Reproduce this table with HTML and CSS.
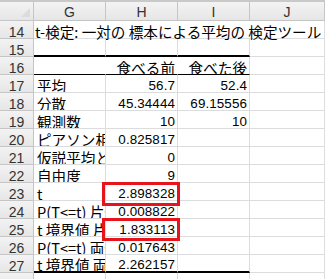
FILE: index.html
```html
<!DOCTYPE html>
<html lang="ja">
<head>
<meta charset="utf-8">
<link rel="stylesheet" href="styles.css">
</head>
<body>
<div class="sheet">
  <div class="hd corner"><span class="tri"></span></div>
  <div class="hd col">G</div>
  <div class="hd col">H</div>
  <div class="hd col">I</div>
  <div class="hd col">J</div>

  <div class="hd rn">14</div>
  <div class="c title span4">t-検定: 一対の 標本による平均の 検定ツール</div>

  <div class="hd rn">15</div>
  <div class="c thickb"></div><div class="c thickb"></div><div class="c thickb"></div><div class="c"></div>

  <div class="hd rn">16</div>
  <div class="c thinb nov"></div><div class="c thinb num nov">食べる前</div><div class="c thinb num">食べた後</div><div class="c"></div>

  <div class="hd rn">17</div>
  <div class="c">平均</div><div class="c num">56.7</div><div class="c num">52.4</div><div class="c"></div>

  <div class="hd rn">18</div>
  <div class="c">分散</div><div class="c num">45.34444</div><div class="c num">69.15556</div><div class="c"></div>

  <div class="hd rn">19</div>
  <div class="c">観測数</div><div class="c num">10</div><div class="c num">10</div><div class="c"></div>

  <div class="hd rn">20</div>
  <div class="c">ピアソン相関</div><div class="c num">0.825817</div><div class="c"></div><div class="c"></div>

  <div class="hd rn">21</div>
  <div class="c">仮説平均との差異</div><div class="c num">0</div><div class="c"></div><div class="c"></div>

  <div class="hd rn">22</div>
  <div class="c">自由度</div><div class="c num">9</div><div class="c"></div><div class="c"></div>

  <div class="hd rn">23</div>
  <div class="c">t</div><div class="c num mark"><span class="box box1"></span>2.898328</div><div class="c"></div><div class="c"></div>

  <div class="hd rn">24</div>
  <div class="c">P(T&lt;=t) 片側</div><div class="c num">0.008822</div><div class="c"></div><div class="c"></div>

  <div class="hd rn">25</div>
  <div class="c">t 境界値 片側</div><div class="c num mark"><span class="box box2"></span>1.833113</div><div class="c"></div><div class="c"></div>

  <div class="hd rn">26</div>
  <div class="c">P(T&lt;=t) 両側</div><div class="c num">0.017643</div><div class="c"></div><div class="c"></div>

  <div class="hd rn">27</div>
  <div class="c thickb">t 境界値 両側</div><div class="c num thickb">2.262157</div><div class="c thickb"></div><div class="c"></div>

  <div class="hd rn">28</div>
  <div class="c"></div><div class="c"></div><div class="c"></div><div class="c"></div>
</div>
</body>
</html>
```

FILE: styles.css
```css
html, body {
  margin: 0;
  padding: 0;
  background: #ffffff;
  overflow: hidden;
}
.sheet {
  display: grid;
  grid-template-columns: 34px 72px 72px 72px 1fr;
  grid-template-rows: 19px repeat(15, 18px);
  width: 325px;
  font-family: "Noto Sans CJK JP", "Liberation Sans", sans-serif;
  font-size: 14.6px;
  color: #000;
  border-top: 2px solid #c9c9c9;
}
.sheet > div {
  box-sizing: border-box;
  border-right: 1px solid #dadcdd;
  border-bottom: 1px solid #dadcdd;
  white-space: nowrap;
  overflow: hidden;
}
.hd {
  background: linear-gradient(#f3f3f3, #e6e6e6);
  color: #333;
  font-family: "Liberation Sans", "DejaVu Sans", sans-serif;
  font-size: 14px;
  display: flex;
  align-items: center;
  justify-content: center;
}
.sheet > .hd {
  border-right: 1px solid #c5c5c5;
  border-bottom: 1px solid #c5c5c5;
}
.col {
  padding-top: 1px;
}
.corner {
  position: relative;
}
.tri {
  position: absolute;
  right: 3px;
  bottom: 3px;
  width: 0;
  height: 0;
  border-left: 9px solid transparent;
  border-bottom: 9px solid #dcdcdc;
}
.rn {
  font-size: 14px;
  padding-top: 5px;
}
.c {
  display: flex;
  align-items: flex-end;
  padding: 0 2px 0 3px;
  line-height: 12px;
}
.sheet > .span4 {
  grid-column: span 4;
  overflow: visible;
}
.title {
  padding-left: 1px;
}
.num {
  justify-content: flex-end;
  font-family: "Liberation Sans", sans-serif;
  font-size: 13.4px;
  letter-spacing: 0.1px;
}
.sheet > .num.thinb {
  font-family: "Noto Sans CJK JP", sans-serif;
  font-size: 14.6px;
  letter-spacing: 0;
}
.sheet > .thickb {
  border-bottom: 2px solid #000;
}
.sheet > .thinb {
  border-bottom: 1px solid #000;
}
.sheet > .nov {
  border-right-color: #fff;
}
.sheet > .mark {
  position: relative;
  overflow: visible;
}
.box {
  position: absolute;
  left: -4px;
  top: -1px;
  width: 78px;
  box-sizing: border-box;
  border: 3px solid #e8141c;
  z-index: 2;
}
.box1 {
  height: 24px;
}
.box2 {
  height: 23px;
}
```
